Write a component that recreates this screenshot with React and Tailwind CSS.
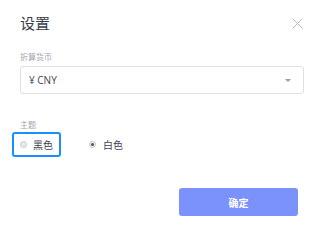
import React from 'react';

const Radio = ({ checked }) => (
  <span className="w-[7px] h-[7px] rounded-full border border-[#c8c9cf] bg-[#e9eaee] flex items-center justify-center">
    {checked && <span className="w-[3px] h-[3px] rounded-full bg-[#555]" />}
  </span>
);

const App = () => {
  return (
    <div
      className="w-[322px] h-[240px] bg-white pl-5 pr-[18px] pt-[13px] flex flex-col"
      style={{ fontFamily: '"Noto Sans CJK SC", "Noto Sans", sans-serif' }}
    >
      {/* header */}
      <div className="h-[20px] flex items-center justify-between">
        <span className="text-[15px] leading-[20px] text-[#3a3d4d]">设置</span>
        <svg width="11" height="11" viewBox="0 0 11 11" className="mr-[1px]">
          <path d="M0.5 0.5L10.5 10.5M10.5 0.5L0.5 10.5" stroke="#b4b6c0" strokeWidth="1" />
        </svg>
      </div>

      {/* currency */}
      <div className="mt-[19px] text-[8px] leading-[10px] text-[#a4a6b0]">折算货币</div>
      <div className="mt-[4px] h-[28px] border border-[#dfe0e6] rounded-[3px] pl-[8px] pr-[12px] flex items-center justify-between">
        <span
          className="text-[10px] font-normal text-[#3f4252]"
          style={{ fontFamily: '"Open Sans", "Noto Sans CJK SC", sans-serif' }}
        >
          ¥ CNY
        </span>
        <span className="w-0 h-0 border-l-[3.5px] border-r-[3.5px] border-t-[3.5px] border-l-transparent border-r-transparent border-t-[#9a9ca6]" />
      </div>

      {/* theme */}
      <div className="mt-[26px] text-[8px] leading-[10px] text-[#a4a6b0]">主题</div>
      <div className="mt-[2px] flex items-center">
        <div className="-ml-[8px] w-[49px] h-[25px] border-2 border-[#1a8fff] rounded-[3px] pl-[6px] flex items-center gap-[6px]">
          <Radio />
          <span className="text-[10px] text-[#3f4252]">黑色</span>
        </div>
        <div className="ml-[28px] flex items-center gap-[7px]">
          <Radio checked />
          <span className="text-[10px] text-[#3f4252]">白色</span>
        </div>
      </div>

      {/* confirm */}
      <button className="mt-[31px] self-end mr-[6px] w-[119px] h-[28px] rounded-[3px] bg-[#7b91fb] text-white text-[10px] font-bold">
        确定
      </button>
    </div>
  );
};

export default App;
